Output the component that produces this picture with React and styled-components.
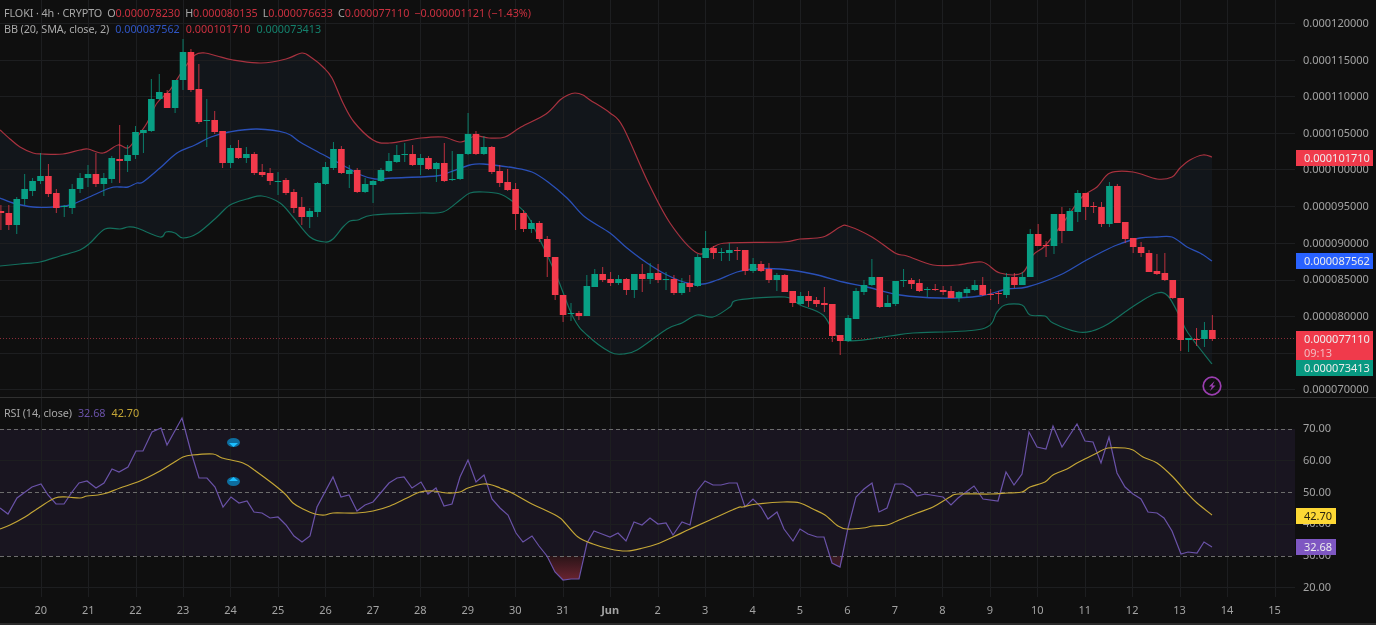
import React from "react";
import styled, { createGlobalStyle } from "styled-components";

const GlobalStyle = createGlobalStyle`
    html, body {
        margin: 0;
        padding: 0;
        background: #0f0f0f;
    }
    #root {
        width: 1376px;
        height: 625px;
    }
`;

// candle: [colour, body top, body bottom, wick top, wick bottom] in chart pixels
const candles = [
    ["r",211,213,205,230],["r",213,225,205,230],["g",199,225,197,234],["g",189,199,174,205],["g",181,191,178,196],
    ["g",176,181,153,184],["r",176,194,164,197],["r",193,208,189,213],["g",206,207,205,217],["g",189,208,184,214],
    ["g",178,189,173,193],["g",174,178,165,187],["r",174,184,153,187],["g",178,184,173,196],["g",158,179,156,183],
    ["r",159,161,125,183],["g",155,161,145,172],["g",132,155,126,159],["g",130,133,130,153],["g",99,131,79,132],
    ["g",92,99,74,100],["r",93,108,90,108],["g",80,108,80,113],["g",52,80,39,90],["r",52,90,49,92],
    ["r",89,122,64,124],["g",120,121,99,147],["r",120,132,111,134],["r",131,163,131,168],["g",148,163,145,168],
    ["r",148,158,140,159],["g",154,158,147,163],["r",154,173,152,175],["r",172,175,164,177],["r",173,181,168,185],
    ["g",181,182,172,195],["r",180,193,178,195],["r",192,208,189,213],["r",207,217,197,225],["g",211,217,208,228],
    ["g",183,212,182,217],["g",167,184,162,185],["g",149,168,142,170],["r",149,173,146,174],["g",170,174,165,188],
    ["r",170,192,168,193],["g",184,192,178,193],["g",181,185,180,203],["g",170,181,168,182],["g",161,171,153,172],
    ["g",155,162,145,163],["g",154,155,143,162],["r",154,165,145,166],["g",158,165,154,175],["r",158,169,156,170],
    ["g",163,169,162,182],["r",163,181,143,182],["g",179,180,151,181],["g",154,179,154,180],["g",134,154,113,155],
    ["r",134,154,131,155],["g",147,154,136,155],["r",147,172,146,174],["r",171,183,165,187],["r",182,190,169,191],
    ["r",189,214,183,230],["r",213,229,210,232],["g",223,229,220,233],["r",223,239,221,242],["r",239,257,236,277],
    ["r",257,295,257,300],["r",295,315,295,322],["g",313,314,303,321],["r",313,316,311,320],["g",286,316,275,316],
    ["g",274,287,269,287],["r",274,280,267,282],["r",279,283,272,286],["g",279,283,275,285],["r",279,290,278,295],
    ["g",274,290,274,298],["r",274,279,264,292],["g",273,279,263,284],["r",273,280,264,283],["g",279,280,272,290],
    ["r",279,293,275,295],["g",283,293,278,295],["r",283,287,275,292],["g",257,286,254,287],["g",248,258,231,258],
    ["r",248,253,246,259],["g",252,253,248,261],["g",250,253,243,261],["r",250,251,247,260],["r",250,271,250,275],
    ["g",264,271,258,273],["r",264,271,261,272],["r",269,280,263,283],["g",275,280,273,291],["r",275,292,274,292],
    ["r",291,303,291,307],["g",296,304,292,305],["r",296,301,291,307],["r",300,304,297,307],["r",303,305,287,312],
    ["r",304,336,304,342],["r",335,341,335,355],["g",318,341,315,342],["g",291,319,288,319],["g",285,292,280,295],
    ["g",277,285,259,286],["r",277,307,277,308],["g",303,307,295,307],["g",281,304,281,306],["g",280,281,269,287],
    ["r",280,284,278,289],["r",283,291,279,292],["g",289,290,287,297],["r",289,290,284,291],["r",290,292,286,295],
    ["r",291,298,286,298],["g",292,298,291,302],["g",289,293,287,298],["g",285,290,280,291],["r",285,295,277,296],
    ["r",294,295,289,300],["r",293,294,291,304],["g",277,295,273,298],["r",277,285,273,288],["g",277,285,272,285],
    ["g",234,277,229,277],["r",234,246,224,246],["r",245,246,241,257],["g",214,246,214,254],["r",214,231,207,243],
    ["g",211,231,208,231],["g",193,212,190,222],["r",193,207,193,220],["r",206,207,202,213],["r",207,224,202,227],
    ["g",186,224,182,227],["r",186,223,184,223],["r",222,239,222,243],["r",238,247,238,253],["r",247,253,242,257],
    ["r",253,272,250,272],["r",271,274,254,275],["r",273,280,253,281],["r",280,298,280,299],["r",298,340,298,351],
    ["g",338,340,338,352],["r",339,340,328,346],["g",330,339,322,347],["r",330,339,315,341],
];

const upperBand = [[0,130],[10,139],[20,147],[33,153],[43,154],[63,154],[80,150],[88,149],[103,153],[118,145],[128,148],[137,137],[147,123],[157,103],[170,90],[183,70],[195,55],[205,53],[217,56],[233,60],[261,63],[286,59],[302,53],[312,58],[323,67],[332,78],[343,103],[354,122],[373,140],[389,143],[421,138],[443,137],[461,142],[475,136],[489,138],[505,137],[521,127],[546,114],[560,100],[568,95],[575,93],[583,95],[590,100],[610,113],[623,127],[647,180],[670,223],[697,253],[713,247],[727,243],[783,242],[800,239],[823,237],[840,227],[848,226],[872,237],[895,253],[907,256],[933,265],[957,265],[982,262],[1000,273],[1022,273],[1033,255],[1045,246],[1063,223],[1082,197],[1097,187],[1110,173],[1133,172],[1157,179],[1172,177],[1180,168],[1190,160],[1203,155],[1212,157]];

const basis = [[0,198],[13,203],[33,207],[53,207],[70,205],[87,198],[110,188],[120,187],[128,187],[137,183],[143,182],[160,168],[177,153],[195,145],[211,137],[229,132],[257,129],[286,133],[300,142],[318,152],[339,163],[361,175],[375,179],[393,178],[436,176],[450,172],[470,165],[483,164],[515,168],[532,172],[548,182],[567,198],[585,217],[610,233],[627,248],[647,263],[667,275],[687,283],[703,284],[717,280],[737,272],[753,269],[780,269],[813,274],[843,282],[867,287],[900,295],[940,298],[980,296],[1007,289],[1027,287],[1060,275],[1083,262],[1100,253],[1117,245],[1140,238],[1157,237],[1172,237],[1187,247],[1200,253],[1212,261]];

const lowerBand = [[0,266],[20,264],[40,262],[60,256],[80,250],[90,243],[105,229],[120,229],[128,227],[137,228],[160,237],[166,232],[175,233],[183,238],[198,233],[217,217],[230,205],[247,199],[262,196],[280,203],[293,217],[310,237],[325,242],[333,239],[343,227],[350,221],[358,220],[373,215],[420,213],[443,212],[460,200],[470,193],[483,192],[500,194],[512,201],[527,215],[540,240],[557,277],[573,317],[587,335],[610,352],[623,354],[637,350],[667,329],[682,323],[697,315],[713,317],[730,307],[738,300],[785,297],[800,305],[823,315],[843,340],[890,336],[913,333],[982,329],[997,312],[1005,305],[1022,305],[1030,315],[1045,316],[1053,323],[1078,332],[1092,331],[1108,324],[1125,312],[1140,302],[1157,293],[1168,296],[1180,317],[1188,333],[1212,364]];

const rsi = [[0,508],[8,514],[17,498],[32,487],[41,484],[48,495],[56,504],[64,504],[72,492],[79,483],[87,481],[96,488],[104,483],[112,469],[119,472],[128,467],[136,451],[143,451],[152,432],[161,428],[167,445],[182,418],[191,452],[199,478],[207,478],[215,487],[223,507],[231,497],[239,503],[247,501],[254,512],[262,513],[270,518],[278,517],[286,525],[294,536],[302,542],[310,536],[317,507],[333,477],[341,497],[349,495],[357,511],[365,505],[373,502],[389,483],[397,478],[404,477],[412,488],[421,482],[428,494],[436,488],[444,506],[452,504],[460,477],[468,460],[476,482],[484,475],[492,499],[500,508],[508,515],[516,533],[523,542],[532,536],[539,546],[547,556],[555,572],[563,580],[571,579],[579,579],[587,543],[594,531],[602,534],[610,537],[618,533],[626,541],[634,522],[642,525],[650,518],[658,524],[666,523],[673,535],[682,522],[690,525],[697,491],[705,481],[713,485],[721,485],[729,483],[737,483],[745,507],[753,499],[761,507],[768,519],[777,512],[784,529],[793,541],[800,529],[808,534],[817,537],[824,537],[832,563],[840,567],[848,528],[856,497],[864,489],[872,483],[879,512],[887,508],[895,484],[903,484],[910,488],[917,496],[925,494],[943,497],[951,505],[958,498],[974,486],[983,499],[998,501],[1006,472],[1014,485],[1022,474],[1029,432],[1037,447],[1046,449],[1053,426],[1062,447],[1077,424],[1085,441],[1093,442],[1101,463],[1109,437],[1117,473],[1125,487],[1133,494],[1141,499],[1148,512],[1157,513],[1164,518],[1172,531],[1181,554],[1188,552],[1197,553],[1204,542],[1212,547]];

const rsiMa = [[0,529],[10,525],[25,517],[40,507],[55,498],[67,497],[80,498],[87,496],[98,495],[107,493],[120,488],[140,481],[160,471],[173,463],[183,457],[192,455],[213,454],[222,458],[243,463],[257,472],[283,492],[293,503],[303,509],[315,514],[325,515],[333,513],[357,513],[373,511],[390,506],[407,498],[420,492],[433,491],[447,493],[460,492],[468,488],[483,484],[492,485],[500,488],[512,493],[530,503],[557,516],[565,523],[578,537],[593,544],[610,549],[627,551],[643,548],[657,544],[673,537],[690,529],[710,520],[737,508],[743,507],[757,504],[783,502],[800,503],[813,509],[825,515],[838,526],[847,529],[863,528],[873,526],[887,525],[897,521],[917,513],[933,507],[950,497],[958,494],[990,494],[1007,493],[1022,492],[1030,487],[1045,482],[1053,475],[1067,469],[1077,463],[1087,458],[1097,453],[1108,448],[1125,448],[1133,450],[1143,457],[1157,463],[1173,477],[1187,493],[1197,503],[1212,515]];

const dayLabels = ["20","21","22","23","24","25","26","27","28","29","30","31","Jun","2","3","4","5","6","7","8","9","10","11","12","13","14","15"];
const priceTicks = ["0.000120000","0.000115000","0.000110000","0.000105000","0.000100000","0.000095000","0.000090000","0.000085000","0.000080000","0.000075000","0.000070000"];
const rsiTicks = ["70.00","60.00","50.00","40.00","30.00","20.00"];

const PLOT_W = 1295;
const pts = (list) => list.map(([x, y]) => `${x},${y}`).join(" ");
const candleX = (i) => 0.9 + i * 7.918;
const dayX = (i) => Math.round(40.6 + i * 47.46) + 0.5;

// catmull-rom through the sampled points so the bands don't look faceted
const smooth = (list) => {
    let d = `M${list[0][0]} ${list[0][1]}`;
    for (let i = 0; i < list.length - 1; i++) {
        const p0 = list[i - 1] || list[i];
        const p1 = list[i];
        const p2 = list[i + 1];
        const p3 = list[i + 2] || p2;
        const c1x = p1[0] + (p2[0] - p0[0]) / 6;
        const c1y = p1[1] + (p2[1] - p0[1]) / 6;
        const c2x = p2[0] - (p3[0] - p1[0]) / 6;
        const c2y = p2[1] - (p3[1] - p1[1]) / 6;
        d += `C${c1x.toFixed(1)} ${c1y.toFixed(1)} ${c2x.toFixed(1)} ${c2y.toFixed(1)} ${p2[0]} ${p2[1]}`;
    }
    return d;
};

const Page = styled.div`
    width: 1376px;
    height: 625px;
    display: flex;
    flex-direction: column;
    overflow: hidden;
    background: #0f0f0f;
    font-family: "Noto Sans", "Liberation Sans", sans-serif;
    color: #a3a3a3;
    filter: blur(0.3px);
`;

const Pane = styled.div`
    display: flex;
    height: ${({$height}) => $height}px;
    border-bottom: ${({$divided}) => $divided ? "1px solid #303030" : "none"};
    flex: none;
`;

const Plot = styled.div`
    position: relative;
    width: ${PLOT_W}px;
    flex: none;
`;

const ChartSvg = styled.svg`
    display: block;
`;

const Legend = styled.div`
    position: absolute;
    top: ${({$top}) => $top}px;
    left: 4px;
    display: flex;
    flex-direction: column;
    gap: 3px;
    font-size: 10.8px;
    line-height: 13px;
    white-space: pre;
`;

const LegendRow = styled.div`
    display: flex;
`;

const LegendLabel = styled.span`
    color: #a8a8a8;
    letter-spacing: -0.1px;
    margin-left: ${({$gap}) => $gap || 0}px;
`;

const LegendValue = styled.span`
    color: ${({$color}) => $color};
    margin-left: ${({$gap}) => $gap || 0}px;
`;

const Scale = styled.div`
    position: relative;
    flex: 1;
    display: flex;
    flex-direction: column;
    padding-top: ${({$top}) => $top}px;
    font-size: 11px;
`;

const Tick = styled.div`
    flex: none;
    height: ${({$step}) => $step}px;
    line-height: ${({$step}) => $step}px;
    padding-left: 8px;
`;

const Badge = styled.div`
    position: absolute;
    left: 1px;
    top: ${({$top}) => $top}px;
    width: ${({$width}) => $width}px;
    padding: 1px 0 1px 8px;
    box-sizing: border-box;
    background: ${({$bg}) => $bg};
    color: ${({$fg}) => $fg || "#ededed"};
    font-size: 11px;
    line-height: 14px;
`;

const BadgeNote = styled.div`
    color: #f2bcc2;
`;

const TimeAxis = styled.div`
    flex: none;
    height: 26px;
    display: flex;
    padding-left: 17px;
    border-bottom: 2px solid #2a2a2a;
    font-size: 11px;
    line-height: 26px;
`;

const Day = styled.div`
    flex: none;
    width: 47.46px;
    text-align: center;
    font-weight: ${({$bold}) => $bold ? 700 : 400};
`;

const Grid = ({top, bottom, ys}) => (
    <g stroke="#1d1e20" strokeWidth="1">
        {ys.map((y) => <line key={y} x1="0" x2={PLOT_W} y1={y} y2={y} />)}
        {dayLabels.map((d, i) => <line key={d} x1={dayX(i)} x2={dayX(i)} y1={top} y2={bottom} />)}
    </g>
);

const Candle = ({data, index}) => {
    const [kind, bodyTop, bodyBottom, wickTop, wickBottom] = data;
    const x = candleX(index);
    const color = kind === "g" ? "#089f84" : "#f23a4b";
    return (
        <g fill={color}>
            <rect x={x - 0.5} y={wickTop} width="1" height={wickBottom - wickTop} opacity="0.75" />
            <rect x={x - 3.3} y={bodyTop} width="6.6" height={bodyBottom - bodyTop} />
        </g>
    );
};

const Line = ({points, color, width = 1.2}) => (
    <path d={smooth(points)} fill="none" stroke={color} strokeWidth={width} />
);

const PriceChart = () => (
    <ChartSvg width={PLOT_W} height="397" viewBox={`0 0 ${PLOT_W} 397`}>
        <polygon points={pts([...upperBand, ...[...lowerBand].reverse()])} fill="#12161b" />
        <Grid top={0} bottom={397} ys={[23.5, 60.5, 96.5, 133.5, 169.5, 206.5, 243.5, 280.5, 316.5, 353.5, 389.5]} />
        <Line points={upperBand} color="#a8323f" />
        <Line points={lowerBand} color="#14705e" />
        <Line points={basis} color="#2a50b8" width={1.3} />
        <line x1="0" x2={PLOT_W} y1="338.5" y2="338.5" stroke="#8a2c38" strokeDasharray="1 2" />
        {candles.map((c, i) => <Candle key={i} data={c} index={i} />)}
        <circle cx="1212" cy="386" r="8.8" fill="none" stroke="#9b3eb0" strokeWidth="1.7" />
        <path d="M1214.500 381L1209 386.500h3L1210 391l5.500-5.500h-3z" fill="#9b3eb0" />
    </ChartSvg>
);

const RsiChart = () => (
    <ChartSvg width={PLOT_W} height="199" viewBox={`0 398 ${PLOT_W} 199`}>
        <defs>
            <linearGradient id="oversold" x1="0" x2="0" y1="0" y2="1">
                <stop offset="0" stopColor="#2a1418" />
                <stop offset="1" stopColor="#6a2430" />
            </linearGradient>
        </defs>
        <rect x="0" y="429" width={PLOT_W} height="127" fill="#191520" />
        <Grid top={398} bottom={597} ys={[460.5, 524.5, 587.5]} />
        <polygon points="547,556 555,572 563,580 571,579 579,579 583,556" fill="url(#oversold)" />
        <polygon points="829,556 832,563 840,567 844,556" fill="#3a1a22" />
        {[429.5, 492.5, 556.5].map((y) => (
            <line key={y} x1="0" x2={PLOT_W} y1={y} y2={y} stroke="#6c6c6c" strokeDasharray="4 3" />
        ))}
        <polyline points={pts(rsi)} fill="none" stroke="#6a52a8" strokeWidth="1.2" />
        <Line points={rsiMa} color="#c4a636" />
        <ellipse cx="233.5" cy="442.5" rx="6.5" ry="4.5" fill="#0e6d9e" />
        <path d="M229 443h9l-4.500 4z" fill="#1cc0ff" />
        <ellipse cx="233.5" cy="481.500" rx="6.5" ry="4.5" fill="#0e6d9e" />
        <path d="M229 481h9l-4.500-4z" fill="#1cc0ff" />
    </ChartSvg>
);

const App = () => (
    <Page>
        <GlobalStyle />
        <Pane $height={397} $divided>
            <Plot>
                <PriceChart />
                <Legend $top={6}>
                    <LegendRow>
                        <LegendLabel>FLOKI · 4h · CRYPTO</LegendLabel>
                        <LegendLabel $gap={5}>O</LegendLabel><LegendValue $color="#c9303f">0.000078230</LegendValue>
                        <LegendLabel $gap={5}>H</LegendLabel><LegendValue $color="#c9303f">0.000080135</LegendValue>
                        <LegendLabel $gap={5}>L</LegendLabel><LegendValue $color="#c9303f">0.000076633</LegendValue>
                        <LegendLabel $gap={5}>C</LegendLabel><LegendValue $color="#c9303f">0.000077110</LegendValue>
                        <LegendValue $color="#c9303f" $gap={5}>−0.000001121 (−1.43%)</LegendValue>
                    </LegendRow>
                    <LegendRow>
                        <LegendLabel>BB (20, SMA, close, 2)</LegendLabel>
                        <LegendValue $color="#2f55c4" $gap={6}>0.000087562</LegendValue>
                        <LegendValue $color="#c9303f" $gap={6}>0.000101710</LegendValue>
                        <LegendValue $color="#14806c" $gap={6}>0.000073413</LegendValue>
                    </LegendRow>
                </Legend>
            </Plot>
            <Scale $top={5}>
                {priceTicks.map((t) => <Tick key={t} $step={36.6}>{t}</Tick>)}
                <Badge $top={150} $width={77} $bg="#f03a4b">0.000101710</Badge>
                <Badge $top={253} $width={77} $bg="#2962ff">0.000087562</Badge>
                <Badge $top={331} $width={77} $bg="#f03a4b">
                    0.000077110
                    <BadgeNote>09:13</BadgeNote>
                </Badge>
                <Badge $top={360} $width={77} $bg="#089981">0.000073413</Badge>
            </Scale>
        </Pane>
        <Pane $height={199}>
            <Plot>
                <RsiChart />
                <Legend $top={8}>
                    <LegendRow>
                        <LegendLabel>RSI (14, close)</LegendLabel>
                        <LegendValue $color="#6a52a8" $gap={6}>32.68</LegendValue>
                        <LegendValue $color="#c4a636" $gap={6}>42.70</LegendValue>
                    </LegendRow>
                </Legend>
            </Plot>
            <Scale $top={14}>
                {rsiTicks.map((t) => <Tick key={t} $step={31.8}>{t}</Tick>)}
                <Badge $top={110} $width={40} $bg="#fdd835" $fg="#2a2410">42.70</Badge>
                <Badge $top={141} $width={40} $bg="#7e57c2">32.68</Badge>
            </Scale>
        </Pane>
        <TimeAxis>
            {dayLabels.map((d) => <Day key={d} $bold={d === "Jun"}>{d}</Day>)}
        </TimeAxis>
    </Page>
);

export default App;
